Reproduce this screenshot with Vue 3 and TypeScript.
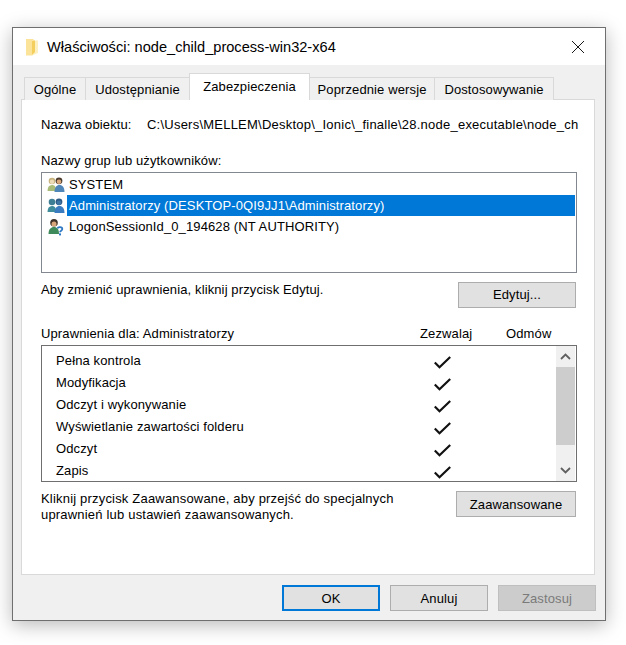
<script setup lang="ts">
const tabs = [
  { label: 'Ogólne', width: 62 },
  { label: 'Udostępnianie', width: 105 },
  { label: 'Zabezpieczenia', width: 121, active: true },
  { label: 'Poprzednie wersje', width: 126 },
  { label: 'Dostosowywanie', width: 120 },
]

const users = [
  { name: 'SYSTEM', icon: 'system' },
  { name: 'Administratorzy (DESKTOP-0QI9JJ1\\Administratorzy)', icon: 'admin', selected: true },
  { name: 'LogonSessionId_0_194628 (NT AUTHORITY)', icon: 'unknown' },
]

const permissions = [
  'Pełna kontrola',
  'Modyfikacja',
  'Odczyt i wykonywanie',
  'Wyświetlanie zawartości folderu',
  'Odczyt',
  'Zapis',
]
</script>

<template>
  <div class="page">
    <div class="dialog">
      <!-- Pasek tytułu -->
      <div class="titlebar">
        <svg class="folder" width="13" height="18" viewBox="0 0 13 18">
          <path d="M0 1h7l2 2v12l-3 2.500H0z" fill="#fbe39a" />
          <path d="M6 2.500h6V15l-6 2.500z" fill="#fdf0c0" />
          <path d="M6 3l3-.5V14l-3 3z" fill="#f5cf5e" />
        </svg>
        <span class="title">Właściwości: node_child_process-win32-x64</span>
        <svg class="close" width="14" height="14" viewBox="0 0 14 14">
          <path d="M1 1l12 12M13 1L1 13" stroke="#1a1a1a" stroke-width="1" fill="none" />
        </svg>
      </div>

      <div class="body">
        <!-- Zakładki -->
        <div class="tabs">
          <div
              v-for="tab in tabs"
              :key="tab.label"
              class="tab"
              :class="{active: tab.active}"
              :style="{width: tab.width + 'px'}"
          >{{ tab.label }}</div>
        </div>

        <div class="panel">
          <div class="object-row">
            <span class="object-label">Nazwa obiektu:</span>
            <span class="object-path">C:\Users\MELLEM\Desktop\_Ionic\_finalle\28.node_executable\node_ch</span>
          </div>

          <div class="group-label">Nazwy grup lub użytkowników:</div>
          <div class="user-list">
            <div v-for="user in users" :key="user.name" class="user-row">
              <svg class="user-icon" width="18" height="18" viewBox="0 0 18 18">
                <template v-if="user.icon === 'system'">
                  <path d="M0.500 15c0-4 1.500-6 4.500-6s4 2 4 6z" fill="#a9bb78" />
                  <circle cx="5" cy="5" r="3.300" fill="#c6b27c" />
                  <circle cx="5" cy="5.800" r="2.200" fill="#ecdcb8" />
                  <path d="M7.500 16c0-4.500 2-7 5-7s5 2.500 5 7z" fill="#4f86b8" />
                  <circle cx="12" cy="4.800" r="3.400" fill="#4a3a2c" />
                  <circle cx="12" cy="5.800" r="2.300" fill="#d9a77a" />
                </template>
                <template v-else-if="user.icon === 'admin'">
                  <path d="M0.500 15c0-4 1.500-6 4.500-6s4 2 4 6z" fill="#3e8c9c" />
                  <circle cx="5" cy="5" r="3.300" fill="#3f7f96" />
                  <path d="M7.500 16c0-4.500 2-7 5-7s5 2.500 5 7z" fill="#3b7cc0" />
                  <circle cx="12" cy="4.800" r="3.400" fill="#2c5a84" />
                  <circle cx="12" cy="5.800" r="2.300" fill="#3f76a6" />
                </template>
                <template v-else>
                  <path d="M1.500 16c0-5 2.500-7 5.500-7s5 2 5 7z" fill="#3f8a5a" />
                  <circle cx="7" cy="4.800" r="3.800" fill="#3f3228" />
                  <circle cx="7" cy="6" r="2.500" fill="#d9a77a" />
                  <path d="M10.500 10.500c.3-2 4.800-2 4.800.4 0 1.800-2.300 1.700-2.300 3.400" stroke="#2f78c4" stroke-width="1.800" fill="none" />
                  <rect x="12" y="15.400" width="2" height="2" fill="#2f78c4" />
                </template>
              </svg>
              <span class="user-name" :class="{selected: user.selected}">{{ user.name }}</span>
            </div>
          </div>

          <div class="edit-row">
            <span>Aby zmienić uprawnienia, kliknij przycisk Edytuj.</span>
            <button class="btn edit-btn">Edytuj...</button>
          </div>

          <div class="perm-header">
            <span class="perm-title">Uprawnienia dla: Administratorzy</span>
            <span class="perm-allow">Zezwalaj</span>
            <span class="perm-deny">Odmów</span>
          </div>
          <div class="perm-list">
            <div class="perm-rows">
              <div v-for="perm in permissions" :key="perm" class="perm-row">
                <span class="perm-name">{{ perm }}</span>
                <svg class="check" width="17" height="13" viewBox="0 0 17 13">
                  <path d="M.8 6.500l4.700 4.700L16.200 1" stroke="#111" stroke-width="2.200" fill="none" />
                </svg>
              </div>
            </div>
            <div class="scrollbar">
              <div class="arrow">
                <svg width="11" height="7" viewBox="0 0 11 7">
                  <path d="M1 6l4.500-4.500L10 6" stroke="#606060" stroke-width="1.800" fill="none" />
                </svg>
              </div>
              <div class="track"><div class="thumb"></div></div>
              <div class="arrow">
                <svg width="11" height="7" viewBox="0 0 11 7">
                  <path d="M1 1l4.500 4.500L10 1" stroke="#606060" stroke-width="1.800" fill="none" />
                </svg>
              </div>
            </div>
          </div>

          <div class="advanced-row">
            <p>Kliknij przycisk Zaawansowane, aby przejść do specjalnych<br>uprawnień lub ustawień zaawansowanych.</p>
            <button class="btn advanced-btn">Zaawansowane</button>
          </div>
        </div>

        <!-- Przyciski dialogu -->
        <div class="footer">
          <button class="btn footer-btn primary">OK</button>
          <button class="btn footer-btn">Anuluj</button>
          <button class="btn footer-btn disabled">Zastosuj</button>
        </div>
      </div>
    </div>
  </div>
</template>

<style>
html, body {
  background: #fff;
  overflow: hidden;
}
</style>

<style scoped>
.page {
  width: 626px;
  height: 645px;
  padding: 27px 0 0 12px;
  box-sizing: border-box;
  font-family: "Liberation Sans", Arial, sans-serif;
  font-size: 13px;
  letter-spacing: 0.12px;
  color: #000;
}

.dialog {
  width: 594px;
  height: 594px;
  box-sizing: border-box;
  border: 1px solid #6f6f6f;
  background: #f0f0f0;
  box-shadow: 0 4px 18px rgba(0, 0, 0, 0.28);
  display: flex;
  flex-direction: column;
}

.titlebar {
  height: 37px;
  flex: none;
  background: #fff;
  display: flex;
  align-items: center;
  padding: 0 20px 0 13px;
}

.folder {
  margin-right: 8px;
}

.title {
  font-size: 14.6px;
  letter-spacing: 0;
  flex: 1;
}

.body {
  flex: 1;
  padding: 8px 10px 0 8px;
  display: flex;
  flex-direction: column;
}

.tabs {
  display: flex;
  align-items: flex-end;
  height: 27px;
  padding-left: 4px;
  position: relative;
  z-index: 1;
  margin-bottom: -1px;
}

.tab {
  height: 23px;
  box-sizing: border-box;
  border: 1px solid #d9d9d9;
  border-bottom: none;
  margin-left: -1px;
  background: #f0f0f0;
  text-align: center;
  line-height: 24px;
  white-space: nowrap;
  flex: none;
}

.tab.active {
  height: 27px;
  background: #fff;
  line-height: 26px;
}

.panel {
  width: 574px;
  height: 476px;
  box-sizing: border-box;
  flex: none;
  border: 1px solid #d9d9d9;
  background: #fff;
  padding: 16px 16px 0 19px;
}

.object-row {
  display: flex;
  height: 17px;
  line-height: 17px;
  white-space: nowrap;
}

.object-label {
  width: 106px;
  flex: none;
}

.object-path {
  letter-spacing: 0.23px;
}

.group-label {
  margin-top: 19px;
  margin-bottom: 3px;
  line-height: 17px;
}

.user-list {
  height: 101px;
  width: 536px;
  box-sizing: border-box;
  border: 1px solid #828790;
  padding-top: 1px;
}

.user-row {
  height: 21px;
  display: flex;
  align-items: center;
  padding-left: 5px;
}

.user-icon {
  flex: none;
  margin-right: 2px;
}

.user-name {
  flex: 1;
  line-height: 21px;
  white-space: nowrap;
  padding-left: 2px;
}

.user-name.selected {
  background: #0078d7;
  color: #fff;
  margin-right: 1px;
}

.btn {
  box-sizing: border-box;
  height: 26px;
  border: 1px solid #adadad;
  background: #e1e1e1;
  font: inherit;
  letter-spacing: inherit;
  color: #000;
  padding: 0;
}

.edit-row {
  display: flex;
  justify-content: space-between;
  align-items: flex-start;
  width: 535px;
  margin-top: 9px;
  line-height: 16px;
}

.edit-btn {
  width: 118px;
}

.perm-header {
  display: flex;
  margin-top: 17px;
  height: 20px;
  line-height: 17px;
}

.perm-title {
  width: 379px;
}

.perm-allow {
  width: 86px;
}

.perm-list {
  width: 536px;
  height: 137px;
  box-sizing: border-box;
  border: 1px solid #6f6f6f;
  display: flex;
  overflow: hidden;
}

.perm-rows {
  flex: 1;
  padding-top: 3px;
}

.perm-row {
  height: 22px;
  display: flex;
  align-items: center;
  padding-left: 14px;
}

.perm-name {
  width: 378px;
}

.check {
  flex: none;
  margin-top: 4px;
}

.scrollbar {
  width: 19px;
  margin-right: 1px;
  flex: none;
  background: #f0f0f0;
  display: flex;
  flex-direction: column;
}

.arrow {
  height: 21px;
  flex: none;
  display: flex;
  align-items: center;
  justify-content: center;
}

.track {
  flex: 1;
}

.thumb {
  height: 78px;
  background: #cdcdcd;
}

.advanced-row {
  display: flex;
  justify-content: space-between;
  width: 535px;
  margin-top: 9px;
}

.advanced-row p {
  margin: 0;
  line-height: 16px;
  letter-spacing: 0.19px;
}

.advanced-btn {
  width: 120px;
}

.footer {
  display: flex;
  justify-content: flex-end;
  gap: 10px;
  padding-top: 10px;
  margin-right: -1px;
}

.footer-btn {
  width: 98px;
}

.footer-btn.primary {
  border: 2px solid #0078d7;
}

.footer-btn.disabled {
  background: #cccccc;
  border-color: #bfbfbf;
  color: #7a7a7a;
}
</style>
